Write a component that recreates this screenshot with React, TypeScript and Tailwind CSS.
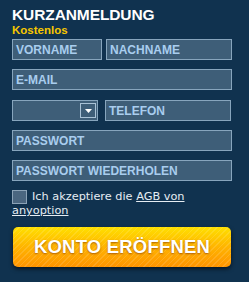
import React from 'react'

function Field({ label, className = '' }: { label: string; className?: string }): React.ReactElement {
  return (
    <div
      className={`h-[21px] border border-[#87a5bd] bg-[#3e5e78] flex items-center pl-[3px] text-[12px] font-bold text-[#a9cdee] leading-none ${className}`}
    >
      {label}
    </div>
  )
}

export default function App(): React.ReactElement {
  return (
    <div
      className="w-[249px] h-[282px] bg-[#10324f] pl-[12px] pt-[6px] overflow-hidden"
      style={{ fontFamily: '"Liberation Sans", Arial, sans-serif' }}
    >
      <div className="text-[15.5px] font-bold text-white leading-[17px] tracking-[-0.1px]">KURZANMELDUNG</div>
      <div className="text-[11.5px] font-bold text-[#f6c700] leading-[12px] mt-[1px]">Kostenlos</div>

      <div className="flex flex-col gap-[9px] mt-[3px]">
        <div className="flex gap-[4px]">
          <Field label="VORNAME" className="w-[90px]" />
          <Field label="NACHNAME" className="w-[126px]" />
        </div>
        <Field label="E-MAIL" className="w-[220px]" />
        <div className="flex gap-[7px] mt-[1px]">
          <div className="w-[86px] h-[21px] border border-[#87a5bd] bg-[#3e5e78] flex items-center justify-end pr-[1px]">
            <div className="w-[16px] h-[15px] border border-[#a9c2d6] flex items-center justify-center">
              <svg width="7" height="4" viewBox="0 0 7 4">
                <path d="M0 0 L7 0 L3.5 4 Z" fill="#ffffff" />
              </svg>
            </div>
          </div>
          <Field label="TELEFON" className="w-[126px]" />
        </div>
        <Field label="PASSWORT" className="w-[220px]" />
        <Field label="PASSWORT WIEDERHOLEN" className="w-[220px]" />
      </div>

      <div
        className="mt-[9px] w-[222px] text-[11.3px] leading-[14px] text-[#e6edf3]"
        style={{ fontFamily: '"DejaVu Sans", Verdana, sans-serif' }}
      >
        <div className="flex items-start">
          <span className="w-[15px] h-[14px] border border-[#8ba3b8] bg-[#4a6680] mr-[5px] shrink-0" />
          <span>
            Ich akzeptiere die <span className="underline">AGB von</span>
          </span>
        </div>
        <div className="underline">anyoption</div>
      </div>

      <div className="mt-[9px] ml-[1px] w-[218px] h-[40px] rounded-[5px] shadow-[0_2px_4px_rgba(0,0,0,0.6)] bg-[linear-gradient(to_bottom,#ffe000,#ffb400_50%,#ff9400)] relative overflow-hidden flex items-center justify-center">
        <div className="absolute inset-0 bg-[repeating-linear-gradient(135deg,rgba(255,255,255,0.12)_0px,rgba(255,255,255,0.12)_1px,transparent_1px,transparent_4px)]" />
        <span className="relative text-[18.5px] font-bold text-white tracking-[0.2px] [text-shadow:0_1px_2px_rgba(150,70,0,0.8)]">
          KONTO ERÖFFNEN
        </span>
      </div>
    </div>
  )
}
